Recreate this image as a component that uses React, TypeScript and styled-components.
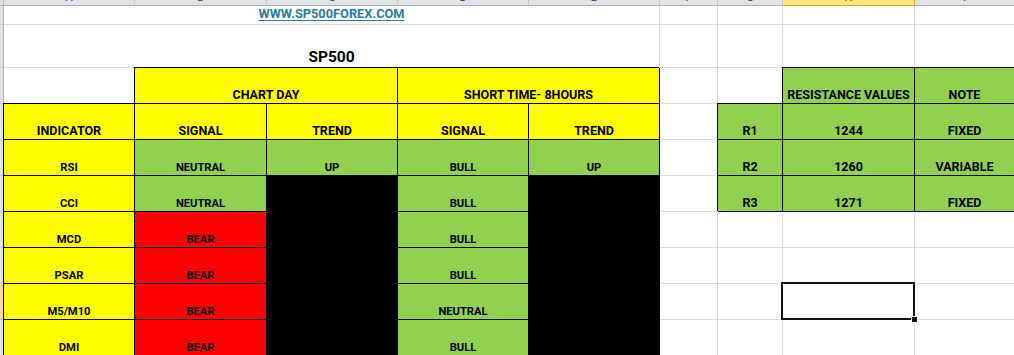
import React from "react";
import styled, { createGlobalStyle, css } from "styled-components";

const GlobalStyle = createGlobalStyle`
  html, body {
    margin: 0;
    padding: 0;
    background: #fff;
    overflow: hidden;
  }
`;

type Fill = "white" | "yellow" | "green" | "red" | "black";

const fills: Record<Fill, string> = {
  white: "#ffffff",
  yellow: "#ffff00",
  green: "#92d050",
  red: "#ff0000",
  black: "#000000",
};

const Sheet = styled.div`
  display: grid;
  grid-template-columns: 4px 131px 132px 131px 131px 131px 58px 65px 132px 100px;
  grid-template-rows: 6px 19px 43px repeat(8, 36px);
  width: 1014px;
  height: 355px;
  overflow: hidden;
  font-family: Roboto, "Liberation Sans", sans-serif;
  font-weight: 700;
  color: #000;
`;

const Corner = styled.div`
  box-sizing: border-box;
  background: #dfe3e8;
  border-right: 1px solid #b7bcc2;
  border-bottom: 1px solid #a9b0b8;
`;

const ColHead = styled.div<{ $active?: boolean }>`
  box-sizing: border-box;
  display: flex;
  align-items: flex-end;
  justify-content: center;
  overflow: hidden;
  padding-bottom: 2px;
  background: ${(p) => (p.$active ? "#fde77a" : "#dfe3e8")};
  border-right: 1px solid ${(p) => (p.$active ? "#e2a23b" : "#c5c9ce")};
  border-bottom: 1px solid ${(p) => (p.$active ? "#e2a23b" : "#a9b0b8")};

  span {
    font-size: 11px;
    line-height: 11px;
    font-weight: 400;
    color: #3a3a3a;
  }
`;

const RowHead = styled.div<{ $active?: boolean }>`
  box-sizing: border-box;
  background: ${(p) => (p.$active ? "#f8d98c" : "#dfe3e8")};
  border-right: 1px solid ${(p) => (p.$active ? "#e2a23b" : "#a9b0b8")};
  border-bottom: 1px solid #c5c9ce;
`;

const Cell = styled.div<{
  $fill?: Fill;
  $boxed?: boolean;
  $span?: number;
  $rows?: number;
  $size?: number;
  $selected?: boolean;
}>`
  grid-column: span ${(p) => p.$span ?? 1};
  grid-row: span ${(p) => p.$rows ?? 1};
  box-sizing: border-box;
  display: flex;
  align-items: flex-end;
  justify-content: center;
  padding-bottom: 2px;
  background: ${(p) => fills[p.$fill ?? "white"]};
  border-right: 1px solid ${(p) => (p.$boxed ? "#000" : "#d9d9d9")};
  border-bottom: 1px solid ${(p) => (p.$boxed ? "#000" : "#d9d9d9")};
  box-shadow: ${(p) => (p.$boxed ? "-1px -1px 0 #000" : "none")};
  font-size: ${(p) => p.$size ?? 12.5}px;
  line-height: 1;
  white-space: nowrap;

  ${(p) =>
    p.$selected &&
    css`
      position: relative;
      z-index: 2;

      &::after {
        content: "";
        position: absolute;
        left: -2px;
        top: -2px;
        right: -1px;
        bottom: -1px;
        border: 2px solid #111;
      }
      &::before {
        content: "";
        position: absolute;
        right: -3px;
        bottom: -3px;
        width: 5px;
        height: 5px;
        background: #111;
        box-shadow: 0 0 0 1px #fff;
        z-index: 1;
      }
    `}
`;

const Link = styled.span`
  color: #2b7a9e;
  font-size: 12.8px;
  text-decoration: underline;
  text-underline-offset: 2px;
  padding-bottom: 1px;
`;

interface IndicatorRow {
  name: string;
  daySignal: [string, Fill];
  shortSignal: [string, Fill];
  dayTrend?: string;
  shortTrend?: string;
  black?: boolean;
  side?: [string, string, string];
}

const rows: IndicatorRow[] = [
  {
    name: "RSI",
    daySignal: ["NEUTRAL", "green"],
    dayTrend: "UP",
    shortSignal: ["BULL", "green"],
    shortTrend: "UP",
    side: ["R2", "1260", "VARIABLE"],
  },
  {
    name: "CCI",
    daySignal: ["NEUTRAL", "green"],
    shortSignal: ["BULL", "green"],
    black: true,
    side: ["R3", "1271", "FIXED"],
  },
  { name: "MCD", daySignal: ["BEAR", "red"], shortSignal: ["BULL", "green"] },
  { name: "PSAR", daySignal: ["BEAR", "red"], shortSignal: ["BULL", "green"] },
  {
    name: "M5/M10",
    daySignal: ["BEAR", "red"],
    shortSignal: ["NEUTRAL", "green"],
  },
  { name: "DMI", daySignal: ["BEAR", "red"], shortSignal: ["BULL", "green"] },
];

const columns = ["A", "B", "C", "D", "E", "F", "G", "H", "I"];
const DATA = 11.2;

export default function App() {
  return (
    <>
      <GlobalStyle />
      <Sheet>
        <Corner />
        {columns.map((c) => (
          <ColHead key={c} $active={c === "H"}>
            <span>{c}</span>
          </ColHead>
        ))}

        <RowHead />
        <Cell $span={5}>
          <Link>WWW.SP500FOREX.COM</Link>
        </Cell>
        <Cell />
        <Cell />
        <Cell />
        <Cell />

        <RowHead />
        <Cell $span={5} $size={15.5}>
          SP500
        </Cell>
        <Cell />
        <Cell />
        <Cell />
        <Cell />

        <RowHead />
        <Cell />
        <Cell $span={2} $fill="yellow" $boxed>
          CHART DAY
        </Cell>
        <Cell $span={2} $fill="yellow" $boxed>
          SHORT TIME- 8HOURS
        </Cell>
        <Cell />
        <Cell />
        <Cell $fill="green" $boxed>
          RESISTANCE VALUES
        </Cell>
        <Cell $fill="green" $boxed>
          NOTE
        </Cell>

        <RowHead />
        <Cell $fill="yellow" $boxed>INDICATOR</Cell>
        <Cell $fill="yellow" $boxed>SIGNAL</Cell>
        <Cell $fill="yellow" $boxed>TREND</Cell>
        <Cell $fill="yellow" $boxed>SIGNAL</Cell>
        <Cell $fill="yellow" $boxed>TREND</Cell>
        <Cell />
        <Cell $fill="green" $boxed>R1</Cell>
        <Cell $fill="green" $boxed>1244</Cell>
        <Cell $fill="green" $boxed>FIXED</Cell>

        {rows.map((r) => (
          <React.Fragment key={r.name}>
            <RowHead $active={r.name === "M5/M10"} />
            <Cell $fill="yellow" $boxed $size={DATA}>
              {r.name}
            </Cell>
            <Cell $fill={r.daySignal[1]} $boxed $size={DATA}>
              {r.daySignal[0]}
            </Cell>
            {r.dayTrend && (
              <Cell $fill="green" $boxed $size={DATA}>
                {r.dayTrend}
              </Cell>
            )}
            {r.black && <Cell $fill="black" $boxed $rows={5} />}
            <Cell $fill={r.shortSignal[1]} $boxed $size={DATA}>
              {r.shortSignal[0]}
            </Cell>
            {r.shortTrend && (
              <Cell $fill="green" $boxed $size={DATA}>
                {r.shortTrend}
              </Cell>
            )}
            {r.black && <Cell $fill="black" $boxed $rows={5} />}
            <Cell />
            {r.side ? (
              r.side.map((v, i) => (
                <Cell key={i} $fill="green" $boxed>
                  {v}
                </Cell>
              ))
            ) : (
              <>
                <Cell />
                <Cell $selected={r.name === "M5/M10"} />
                <Cell />
              </>
            )}
          </React.Fragment>
        ))}
      </Sheet>
    </>
  );
}
